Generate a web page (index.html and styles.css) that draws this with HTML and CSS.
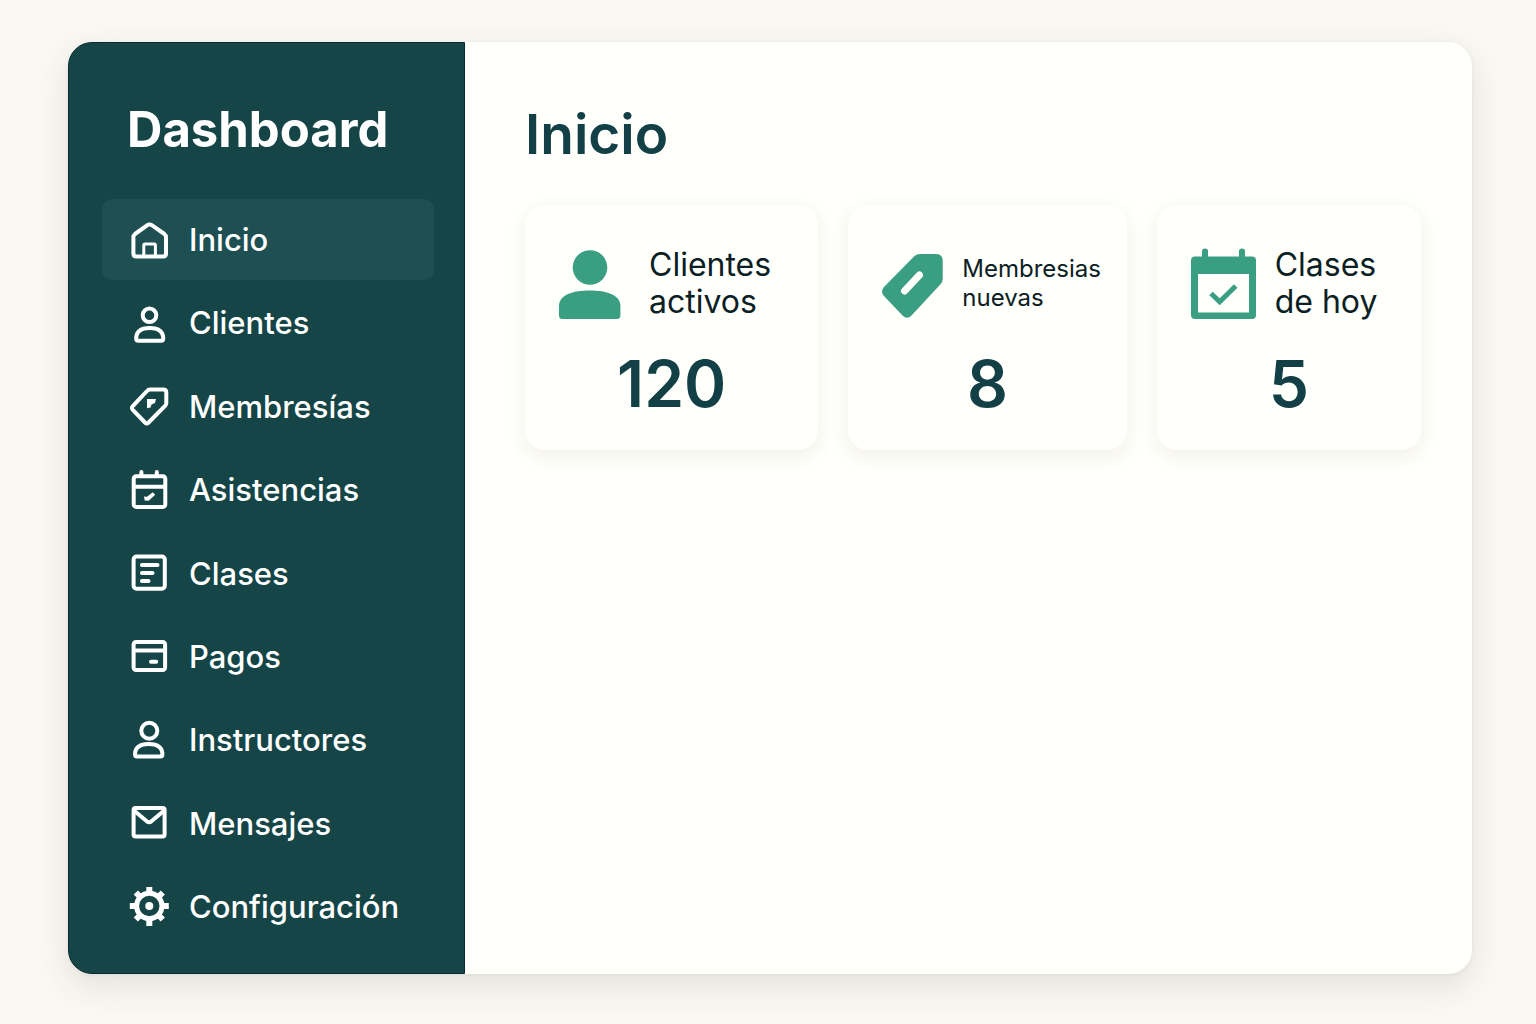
FILE: index.html
```html
<!DOCTYPE html>
<html lang="es">
<head>
  <meta charset="utf-8">
  <meta name="viewport" content="width=device-width, initial-scale=1">
  <title>Dashboard</title>
  <link rel="stylesheet" href="styles.css">
</head>
<body>
  <div class="panel">
    <aside class="sidebar">
      <h2 class="brand">Dashboard</h2>
      <nav class="nav" aria-label="Principal">
        <a class="nav-link nav-link--active" href="#inicio" aria-current="page">
          <svg class="nav-icon" viewBox="0 0 40 40" aria-hidden="true"><path d="M4.4 17.2q0-2 1.600-3.200L18.400 5.200q2.200-1.500 4.400 0L35.400 14q1.600 1.200 1.600 3.200V33.500q0 3-3 3H7.400q-3 0-3-3z"/><path class="thin" d="M14.800 36V25.200q0-1.200 1.200-1.200h9.200q1.200 0 1.200 1.200V36"/></svg>
          Inicio
        </a>
        <a class="nav-link" href="#clientes">
          <svg class="nav-icon" viewBox="0 0 40 40" aria-hidden="true"><circle cx="20.500" cy="12.300" r="6.800"/><path d="M7.200 35.500C7.200 28.500 12 25 20.700 25s13.500 3.500 13.500 10.500q0 2.300-2.200 2.300H9.400q-2.200 0-2.200-2.300z"/></svg>
          Clientes
        </a>
        <a class="nav-link" href="#membresias">
          <svg class="nav-icon" viewBox="0 0 40 40" aria-hidden="true"><path d="M21 3.500H34.300q3 0 3 3V17q0 1.500-1 2.600L19.600 36.500q-1.800 1.800-3.600 0L3.800 23.800q-1.600-1.800 0-3.600L18 5q1.300-1.500 3-1.500z"/><path class="solid" d="M18 13h9l-1 4-3.500 1.500-1 3-3.500.7z"/></svg>
          Membresías
        </a>
        <a class="nav-link" href="#asistencias">
          <svg class="nav-icon" viewBox="0 0 40 40" aria-hidden="true"><rect x="4.700" y="6.300" width="31.600" height="30.600" rx="2.500"/><path d="M5 16.800h31M12.400 2v4M27.800 2v4"/><path class="solid" d="M15 26.500l3 .3 5.700-4.500 2.500 2.500-6.500 6-4-.3z"/></svg>
          Asistencias
        </a>
        <a class="nav-link" href="#clases">
          <svg class="nav-icon" viewBox="0 0 40 40" aria-hidden="true"><rect x="4.600" y="3.600" width="31.200" height="32.200" rx="3"/><path d="M13 12h15.500M13 20h10.500M13 28h6.500"/></svg>
          Clases
        </a>
        <a class="nav-link" href="#pagos">
          <svg class="nav-icon" viewBox="0 0 40 40" aria-hidden="true"><rect x="4.600" y="6" width="31.500" height="28" rx="2.500"/><path d="M5 14.400h31M22 25.700h5.200"/></svg>
          Pagos
        </a>
        <a class="nav-link" href="#instructores">
          <svg class="nav-icon" viewBox="0 0 40 40" aria-hidden="true"><circle cx="20.300" cy="10.700" r="8"/><path d="M6 34.500C6 27.500 11 23.900 19.700 23.900s13.700 3.600 13.700 10.600q0 2-2 2H8q-2 0-2-2z"/></svg>
          Instructores
        </a>
        <a class="nav-link" href="#mensajes">
          <svg class="nav-icon" viewBox="0 0 40 40" aria-hidden="true"><rect x="4.600" y="4.900" width="31" height="28.700" rx="2"/><path d="M5.500 8l12.300 10.300q2.300 1.800 4.600 0L34.700 8"/></svg>
          Mensajes
        </a>
        <a class="nav-link" href="#configuracion">
          <svg class="nav-icon" viewBox="0 0 40 40" aria-hidden="true"><g transform="translate(20.300 19)"><circle class="ring" r="12.700"/><circle class="solid" r="4"/><path class="teeth" d="M0-14V-19.500M0 14V20M-14 0H-19.500M14 0H19.500M-10-10L-13.500-13.500M10-10L13.500-13.500M-10 10L-13.500 13.500M10 10L13.500 13.500"/></g></svg>
          Configuración
        </a>
      </nav>
    </aside>
    <main class="main">
      <h1 class="title">Inicio</h1>
      <section class="cards" aria-label="Resumen">
        <article class="card">
          <div class="card-head card-head--roomy">
            <svg class="card-icon" width="62" height="70" viewBox="0 0 62 70" aria-hidden="true"><circle cx="31" cy="17.500" r="17.300"/><path d="M0 56C0 45 14 40.600 30.700 40.600S61.400 45 61.400 56v9.500q0 3.500-3.500 3.500H3.500Q0 69 0 65.500z"/></svg>
            <h3 class="card-label">Clientes<br>activos</h3>
          </div>
          <p class="card-value">120</p>
        </article>
        <article class="card">
          <div class="card-head">
            <svg class="card-icon" width="62" height="66" viewBox="0 0 62 66" aria-hidden="true"><path d="M38 0H54q6.700 0 6.700 6.700V25q0 3-2.200 5.300L29.500 61.500q-4.500 4.500-9 0L2 42q-4-4.500 0-9L31.500 3Q34 0 38 0z"/><path class="slot" d="M22.500 37L37.500 21"/></svg>
            <h3 class="card-label card-label--small">Membresias<br>nuevas</h3>
          </div>
          <p class="card-value">8</p>
        </article>
        <article class="card">
          <div class="card-head">
            <svg class="card-icon" width="66" height="72" viewBox="0 0 66 72" aria-hidden="true"><path fill-rule="evenodd" d="M4 8.500h7V3q0-2.500 3-2.500T17 3v5.500h31V3q0-2.500 3-2.500T54 3v5.500h7q4 0 4 4V67q0 4-4 4H4q-4 0-4-4V12.500q0-4 4-4zM7 26v38.500h51V26z"/><path class="check" d="M20 45.500l8.700 8.200L44.700 38"/></svg>
            <h3 class="card-label">Clases<br>de hoy</h3>
          </div>
          <p class="card-value">5</p>
        </article>
      </section>
    </main>
  </div>
</body>
</html>
```
FILE: styles.css
```css
:root {
  --page: #faf8f3;
  --surface: #fffffb;
  --teal: #154547;
  --teal-active: #1e4f53;
  --teal-edge: #082a33;
  --ink: #0b2024;
  --heading: #124046;
  --green: #3a9f82;
}

* {
  box-sizing: border-box;
}

body {
  margin: 0;
  min-height: 100vh;
  padding: 42px 64px 50px 68px;
  display: flex;
  background: var(--page);
  font-family: Inter, "Liberation Sans", sans-serif;
}

h1, h2, h3, p {
  margin: 0;
}

.panel {
  flex: 1;
  display: flex;
  border-radius: 24px;
  background: var(--surface);
  box-shadow: 0 12px 32px rgba(70, 60, 40, 0.12), 0 1px 4px rgba(70, 60, 40, 0.06);
}

.sidebar {
  flex: 0 0 397px;
  display: flex;
  flex-direction: column;
  padding: 55px 30px 26px 33px;
  border: 1px solid var(--teal-edge);
  border-radius: 24px 0 0 24px;
  background: var(--teal);
}

.brand {
  padding-left: 25px;
  font-size: 49px;
  line-height: 64px;
  font-weight: 700;
  color: #fff;
}

.nav {
  flex: 1;
  display: flex;
  flex-direction: column;
  justify-content: space-between;
  margin-top: 37px;
}

.nav-link {
  display: flex;
  align-items: center;
  gap: 20px;
  height: 81px;
  padding: 0 27px;
  border-radius: 10px;
  color: #fff;
  font-size: 31px;
  font-weight: 500;
  text-decoration: none;
}

.nav-link--active {
  background: var(--teal-active);
}

.nav-icon {
  flex: none;
  width: 40px;
  height: 40px;
  fill: none;
  stroke: #fff;
  stroke-width: 4;
  stroke-linecap: round;
  stroke-linejoin: round;
}

.nav-icon .thin {
  stroke-width: 3;
}

.nav-icon .solid {
  fill: #fff;
  stroke: none;
}

.nav-icon .ring {
  stroke-width: 5;
}

.nav-icon .teeth {
  stroke-width: 6;
  stroke-linecap: butt;
}

.main {
  flex: 1;
  min-width: 0;
  padding: 58px 51px 58px 60px;
}

.title {
  font-size: 55px;
  line-height: 68px;
  font-weight: 600;
  color: var(--heading);
}

.cards {
  display: grid;
  grid-template-columns: 293fr 278fr 264fr;
  gap: 30px;
  margin-top: 37px;
}

.card {
  padding: 41px 0 34px;
  border-radius: 20px;
  background: var(--surface);
  box-shadow: 0 6px 20px rgba(90, 70, 40, 0.08);
}

.card-head {
  display: flex;
  align-items: center;
  gap: 18px;
  height: 74px;
  padding-left: 34px;
}

.card-head--roomy {
  gap: 28px;
}

.card-icon {
  flex: none;
  align-self: flex-end;
  fill: var(--green);
}

.card-icon .slot {
  fill: none;
  stroke: var(--surface);
  stroke-width: 7;
  stroke-linecap: round;
}

.card-icon .check {
  fill: none;
  stroke: var(--green);
  stroke-width: 5;
}

.card-label {
  font-size: 32px;
  line-height: 37px;
  font-weight: 400;
  color: var(--ink);
}

.card-label--small {
  font-size: 24px;
  line-height: 29px;
}

.card-value {
  margin-top: 32px;
  font-size: 64px;
  line-height: 64px;
  font-weight: 600;
  text-align: center;
  color: var(--heading);
}
```
